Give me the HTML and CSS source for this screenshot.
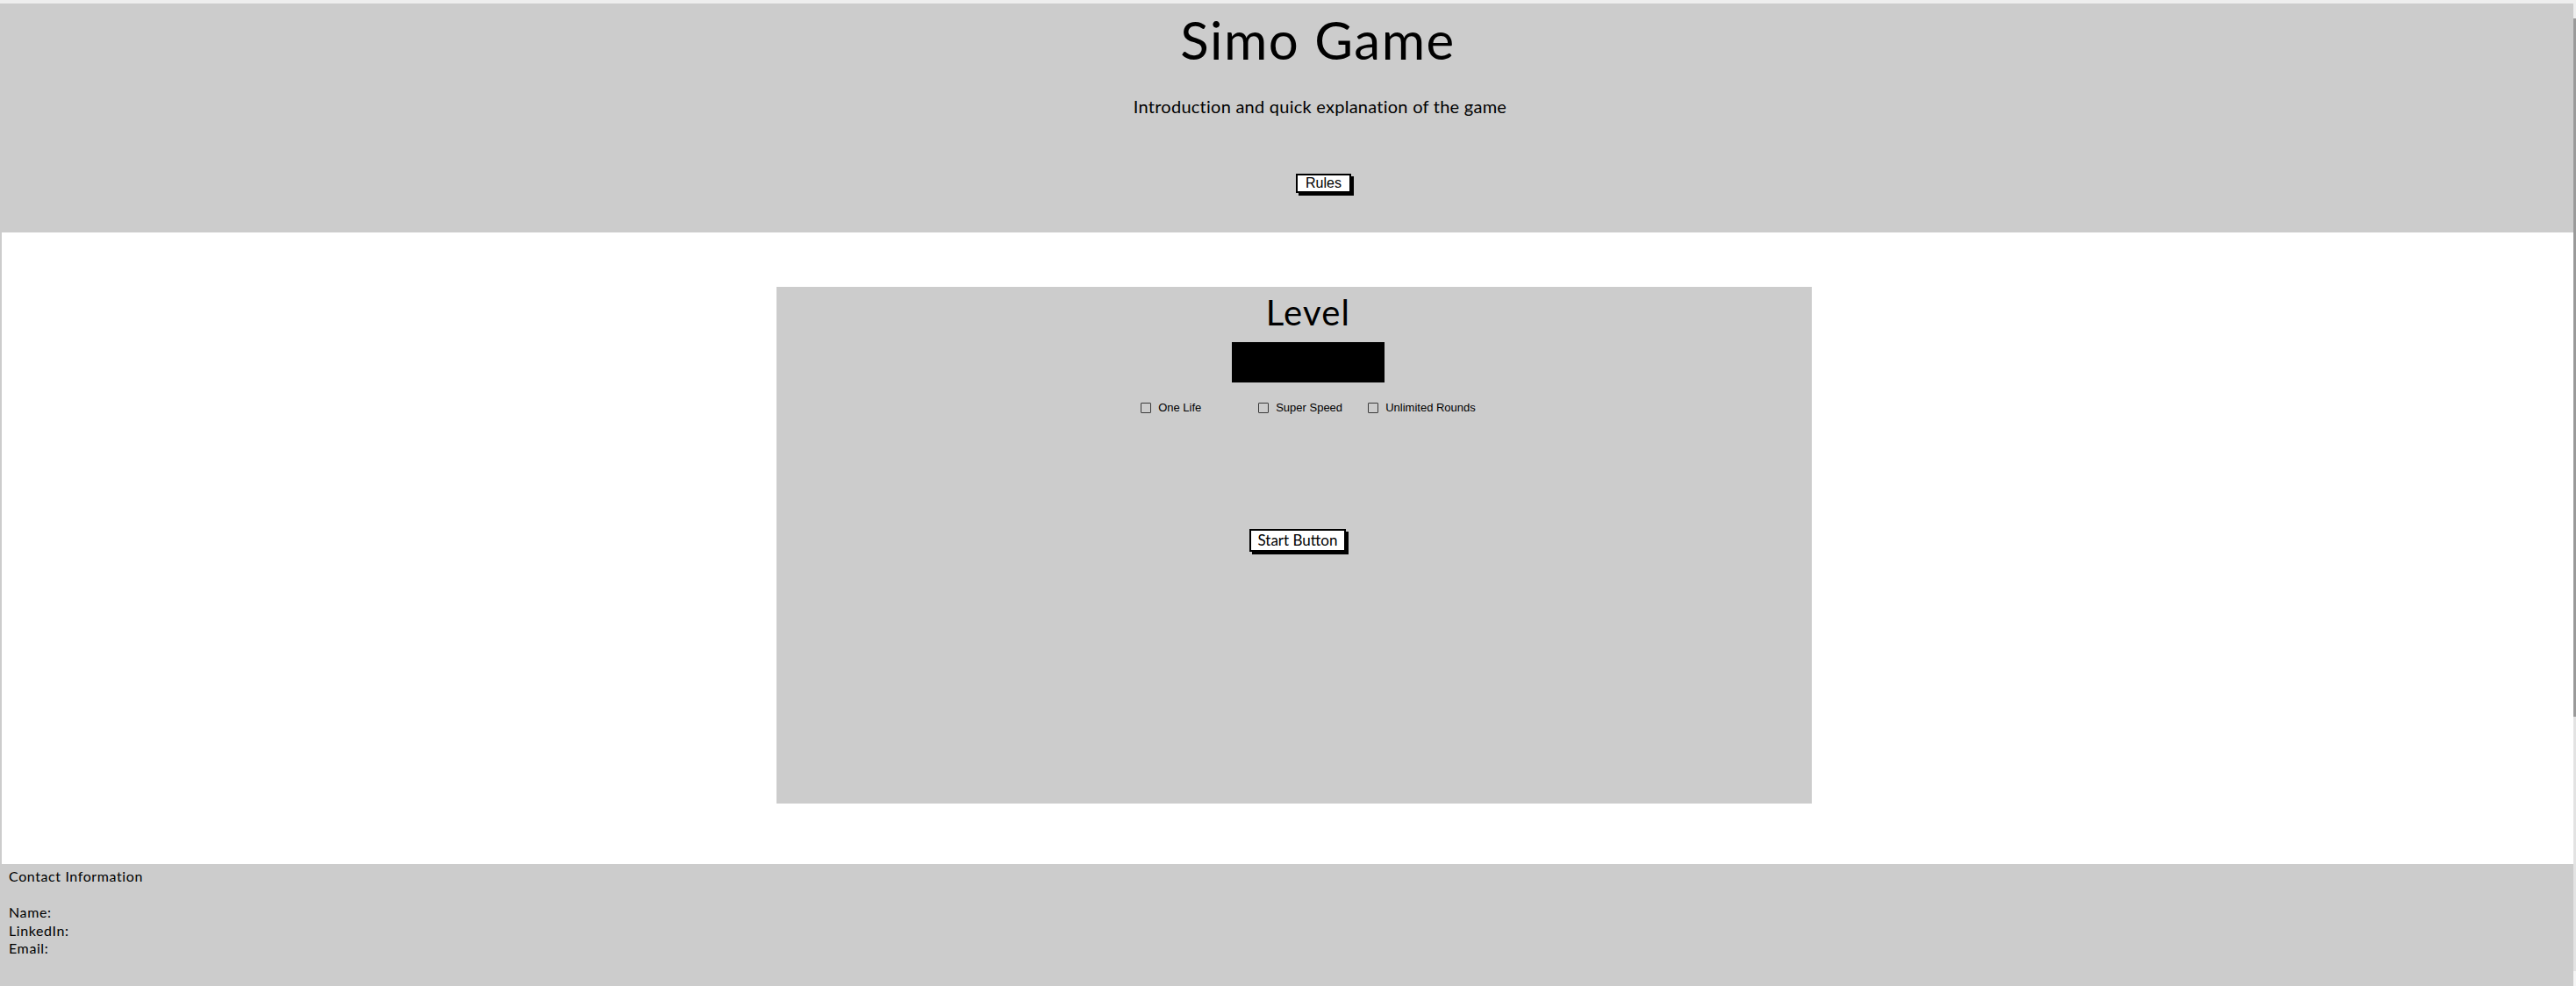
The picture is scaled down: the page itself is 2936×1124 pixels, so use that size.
FILE: index.html
```html
<!DOCTYPE html>
<html lang="en">
<head>
<meta charset="utf-8">
<title>Simo Game</title>
<link rel="stylesheet" href="styles.css">
</head>
<body>
<div class="page">
  <div class="content">
    <div class="topstrip"></div>
    <header class="header">
      <h1 class="title">Simo Game</h1>
      <p class="intro">Introduction and quick explanation of the game</p>
      <button class="btn btn-rules" type="button">Rules</button>
    </header>
    <main class="main">
      <section class="panel">
        <h2 class="level">Level</h2>
        <div class="level-box"></div>
        <div class="options">
          <label class="opt opt-1"><span class="cb"></span><span>One Life</span></label>
          <label class="opt opt-2"><span class="cb"></span><span>Super Speed</span></label>
          <label class="opt opt-3"><span class="cb"></span><span>Unlimited Rounds</span></label>
        </div>
        <button class="btn btn-start" type="button">Start Button</button>
      </section>
    </main>
    <footer class="footer">
      <div class="line">Contact Information</div>
      <div class="line">&nbsp;</div>
      <div class="line">Name:</div>
      <div class="line">LinkedIn:</div>
      <div class="line">Email:</div>
    </footer>
  </div>
  <div class="scrollbar">
    <div class="sb-top"></div>
    <div class="sb-thumb"></div>
    <div class="sb-track"></div>
    <div class="sb-end"></div>
  </div>
</div>
</body>
</html>
```
FILE: styles.css
```css
html, body {
  margin: 0;
  padding: 0;
  height: 1124px;
  overflow: hidden;
}
body {
  font-family: Lato, "Noto Sans", sans-serif;
  color: #000;
  background: #fff;
}
.page {
  display: flex;
  height: 1124px;
}
.content {
  flex: 1;
  min-width: 0;
  display: flex;
  flex-direction: column;
}
.topstrip {
  height: 4px;
  background: #eeeeee;
}
.header {
  height: 261px;
  box-sizing: border-box;
  background: #cccccc;
  display: flex;
  flex-direction: column;
  align-items: center;
  padding: 5px 0 0 76px;
}
.title {
  margin: 0 5px 0 0;
  font-size: 60px;
  font-weight: 400;
  line-height: 72px;
  letter-spacing: 1.5px;
}
.intro {
  margin: 28px 0 0;
  font-size: 20px;
  line-height: 24px;
  letter-spacing: 0.25px;
}
.btn {
  background: #fff;
  color: #000;
  border: 2px solid #000;
  box-shadow: 3px 3px 0 #000;
  border-radius: 0;
  margin: 0;
  cursor: pointer;
}
.btn-rules {
  margin: 65px 0 0 8px;
  font-family: "Liberation Sans", Arial, sans-serif;
  font-size: 16px;
  line-height: 18px;
  padding: 0 9px;
}
.main {
  height: 720px;
  box-sizing: border-box;
  border-left: 2px solid #cccccc;
  padding: 62px 0 0 15px;
  display: flex;
  flex-direction: column;
  align-items: center;
}
.panel {
  width: 1180px;
  height: 589px;
  box-sizing: border-box;
  background: #cccccc;
  display: flex;
  flex-direction: column;
  align-items: center;
  padding: 4.5px 0 0 32px;
}
.level {
  margin: 0;
  font-size: 40px;
  font-weight: 400;
  line-height: 48px;
  letter-spacing: 1.2px;
}
.level-box {
  width: 174px;
  height: 46px;
  background: #000;
  margin-top: 10.5px;
}
.options {
  display: flex;
  align-items: center;
  height: 12px;
  margin-top: 23px;
  font-family: "Liberation Sans", Arial, sans-serif;
  font-size: 13px;
  line-height: 12px;
}
.opt {
  display: flex;
  align-items: center;
  gap: 8px;
}
.opt-1 { width: 134px; }
.opt-2 { width: 125px; }
.cb {
  width: 12px;
  height: 12px;
  box-sizing: border-box;
  border: 1.5px solid #3a3a3a;
  border-radius: 1px;
  flex: none;
}
.btn-start {
  margin: 132px 0 0 -24px;
  font-family: Lato, "Noto Sans", sans-serif;
  font-size: 17px;
  line-height: 20px;
  padding: 1px 7px;
}
.footer {
  flex: 1;
  background: #cccccc;
  box-sizing: border-box;
  padding: 4px 0 0 10px;
  font-size: 16px;
  line-height: 20.5px;
  letter-spacing: 0.6px;
}
.scrollbar {
  width: 3px;
  display: flex;
  flex-direction: column;
}
.sb-top { height: 21px; background: #eeeeee; }
.sb-thumb { height: 796px; background: #9a9a9a; }
.sb-track { height: 290px; background: #e3e3e3; }
.sb-end { flex: 1; background: #f5f5f5; }
```
